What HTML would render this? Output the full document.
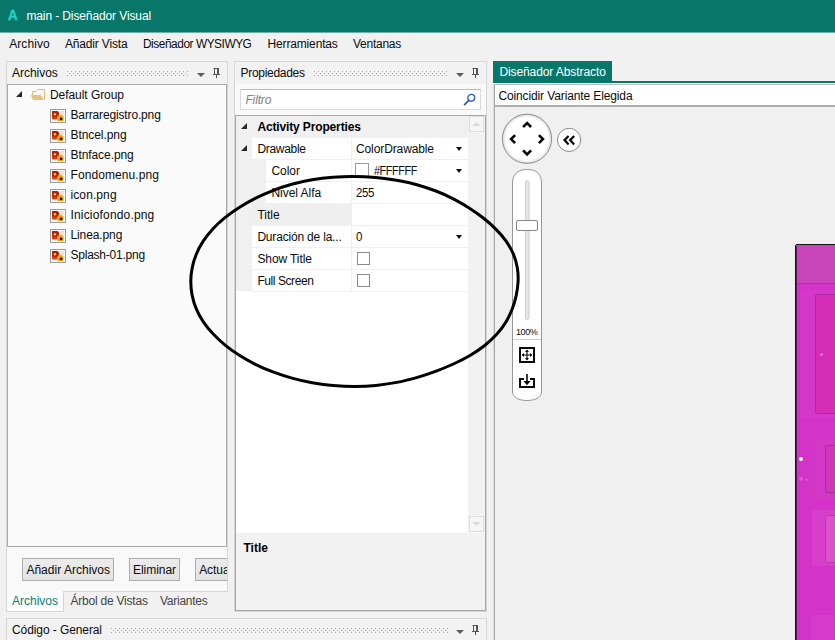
<!DOCTYPE html>
<html lang="es">
<head>
<meta charset="utf-8">
<title>main - Diseñador Visual</title>
<style>
*{box-sizing:border-box;margin:0;padding:0}
html,body{width:835px;height:640px;overflow:hidden;background:#f1f1f1;font-family:"Liberation Sans",sans-serif;font-size:12px;color:#0c0c0c}
.a{position:absolute}
.t{position:absolute;white-space:nowrap;line-height:14px;font-size:12px}
.btn{position:absolute;border:1px solid #adadad;background:linear-gradient(#ececec,#e2e2e2);height:23px}
.hl{position:absolute;height:1px;background:#f0f0f0}
.cb{position:absolute;width:13px;height:13px;border:1px solid #8c8c8c;background:#fff}
.dd{position:absolute;width:0;height:0;border-left:3.5px solid transparent;border-right:3.5px solid transparent;border-top:4px solid #111}
</style>
</head>
<body>
<!-- ===== title bar ===== -->
<div class="a" style="left:0;top:0;width:835px;height:33px;background:#08776a"></div>
<div class="a" style="left:0;top:32px;width:835px;height:1px;background:#6fada5"></div>
<span class="t" style="left:8.3px;top:6.9px;color:#22d1c0;font-weight:bold;font-size:14px;line-height:16px;transform:scaleX(.95);transform-origin:0 0;-webkit-text-stroke:0.5px #22d1c0">A</span>

<!-- ===== left panel: Archivos ===== -->
<div class="a" style="left:6px;top:61px;width:222px;height:531px;background:#f9f9f9;border:1px solid #d6d6d6"></div>
<div class="a" style="left:7px;top:62px;width:220px;height:22px;background:#f2f2f2"></div>
<div class="a" style="left:6px;top:591px;width:58px;height:21px;background:#fcfcfc;border:1px solid #d6d6d6;border-top:none"></div>
<svg class="a" style="left:66px;top:71px" width="122" height="5"><defs><pattern id="gp" width="4" height="4" patternUnits="userSpaceOnUse"><rect x="1" y="0" width="1" height="1" fill="#a6a6a6"/><rect x="3" y="2" width="1" height="1" fill="#a6a6a6"/></pattern></defs><rect width="122" height="5" fill="url(#gp)"/></svg>
<svg class="a" style="left:196px;top:66px" width="26" height="14" viewBox="0 0 26 14"><path d="M1 7h8l-4 4z" fill="#5a5a5a"/><path d="M17.5 2.5h5M18.5 2.5v6M21.5 2v6.5M22.5 2v6.5M17 8.5h7M20.5 9v3" stroke="#555" stroke-width="1" fill="none"/></svg>
<div class="a" style="left:7px;top:84px;width:220px;height:463px;background:#fafafa;border:1px solid #a9a9a9"></div>
<!-- tree -->
<svg class="a" style="left:14px;top:88px" width="34" height="14" viewBox="0 0 34 14"><path d="M2 9h6v-6z" fill="#262626"/><path d="M18.5 7.5V3.5H22L23.5 1.5H30.5V11.5H29" fill="none" stroke="#e8bc76" stroke-width="1"/><path d="M16.8 7H26.7L29.6 11.6V12H19L17.2 8z" fill="#e9bf7c"/></svg>
<svg class="a" style="left:50px;top:109px" width="16" height="14" viewBox="0 0 16 14"><rect x=".5" y=".5" width="15" height="13" fill="#fff" stroke="#9c9c9c"/><svg x="2" y="2" width="12" height="10" viewBox="2 2 12 10"><rect x="2" y="2" width="12" height="10" fill="#eef1e4"/><rect x="9" y="2" width="5" height="4" fill="#e2ead2"/><path d="M2 2H7.6Q9.4 3.4 9.2 5.6L8.4 8L6.2 10.2H3L2 9.4z" fill="#b41f10"/><path d="M2 6.8Q5 8.4 8.6 7L6.2 10.2H3L2 9.4z" fill="#d33d18"/><circle cx="4.9" cy="5.3" r="1.25" fill="#ecd90e"/><circle cx="10.4" cy="9.4" r="3.3" fill="#f5a20f"/><circle cx="11.1" cy="9.9" r="1.35" fill="#1c1206"/></svg></svg>
<svg class="a" style="left:50px;top:129px" width="16" height="14" viewBox="0 0 16 14"><rect x=".5" y=".5" width="15" height="13" fill="#fff" stroke="#9c9c9c"/><svg x="2" y="2" width="12" height="10" viewBox="2 2 12 10"><rect x="2" y="2" width="12" height="10" fill="#eef1e4"/><rect x="9" y="2" width="5" height="4" fill="#e2ead2"/><path d="M2 2H7.6Q9.4 3.4 9.2 5.6L8.4 8L6.2 10.2H3L2 9.4z" fill="#b41f10"/><path d="M2 6.8Q5 8.4 8.6 7L6.2 10.2H3L2 9.4z" fill="#d33d18"/><circle cx="4.9" cy="5.3" r="1.25" fill="#ecd90e"/><circle cx="10.4" cy="9.4" r="3.3" fill="#f5a20f"/><circle cx="11.1" cy="9.9" r="1.35" fill="#1c1206"/></svg></svg>
<svg class="a" style="left:50px;top:149px" width="16" height="14" viewBox="0 0 16 14"><rect x=".5" y=".5" width="15" height="13" fill="#fff" stroke="#9c9c9c"/><svg x="2" y="2" width="12" height="10" viewBox="2 2 12 10"><rect x="2" y="2" width="12" height="10" fill="#eef1e4"/><rect x="9" y="2" width="5" height="4" fill="#e2ead2"/><path d="M2 2H7.6Q9.4 3.4 9.2 5.6L8.4 8L6.2 10.2H3L2 9.4z" fill="#b41f10"/><path d="M2 6.8Q5 8.4 8.6 7L6.2 10.2H3L2 9.4z" fill="#d33d18"/><circle cx="4.9" cy="5.3" r="1.25" fill="#ecd90e"/><circle cx="10.4" cy="9.4" r="3.3" fill="#f5a20f"/><circle cx="11.1" cy="9.9" r="1.35" fill="#1c1206"/></svg></svg>
<svg class="a" style="left:50px;top:169px" width="16" height="14" viewBox="0 0 16 14"><rect x=".5" y=".5" width="15" height="13" fill="#fff" stroke="#9c9c9c"/><svg x="2" y="2" width="12" height="10" viewBox="2 2 12 10"><rect x="2" y="2" width="12" height="10" fill="#eef1e4"/><rect x="9" y="2" width="5" height="4" fill="#e2ead2"/><path d="M2 2H7.6Q9.4 3.4 9.2 5.6L8.4 8L6.2 10.2H3L2 9.4z" fill="#b41f10"/><path d="M2 6.8Q5 8.4 8.6 7L6.2 10.2H3L2 9.4z" fill="#d33d18"/><circle cx="4.9" cy="5.3" r="1.25" fill="#ecd90e"/><circle cx="10.4" cy="9.4" r="3.3" fill="#f5a20f"/><circle cx="11.1" cy="9.9" r="1.35" fill="#1c1206"/></svg></svg>
<svg class="a" style="left:50px;top:189px" width="16" height="14" viewBox="0 0 16 14"><rect x=".5" y=".5" width="15" height="13" fill="#fff" stroke="#9c9c9c"/><svg x="2" y="2" width="12" height="10" viewBox="2 2 12 10"><rect x="2" y="2" width="12" height="10" fill="#eef1e4"/><rect x="9" y="2" width="5" height="4" fill="#e2ead2"/><path d="M2 2H7.6Q9.4 3.4 9.2 5.6L8.4 8L6.2 10.2H3L2 9.4z" fill="#b41f10"/><path d="M2 6.8Q5 8.4 8.6 7L6.2 10.2H3L2 9.4z" fill="#d33d18"/><circle cx="4.9" cy="5.3" r="1.25" fill="#ecd90e"/><circle cx="10.4" cy="9.4" r="3.3" fill="#f5a20f"/><circle cx="11.1" cy="9.9" r="1.35" fill="#1c1206"/></svg></svg>
<svg class="a" style="left:50px;top:209px" width="16" height="14" viewBox="0 0 16 14"><rect x=".5" y=".5" width="15" height="13" fill="#fff" stroke="#9c9c9c"/><svg x="2" y="2" width="12" height="10" viewBox="2 2 12 10"><rect x="2" y="2" width="12" height="10" fill="#eef1e4"/><rect x="9" y="2" width="5" height="4" fill="#e2ead2"/><path d="M2 2H7.6Q9.4 3.4 9.2 5.6L8.4 8L6.2 10.2H3L2 9.4z" fill="#b41f10"/><path d="M2 6.8Q5 8.4 8.6 7L6.2 10.2H3L2 9.4z" fill="#d33d18"/><circle cx="4.9" cy="5.3" r="1.25" fill="#ecd90e"/><circle cx="10.4" cy="9.4" r="3.3" fill="#f5a20f"/><circle cx="11.1" cy="9.9" r="1.35" fill="#1c1206"/></svg></svg>
<svg class="a" style="left:50px;top:229px" width="16" height="14" viewBox="0 0 16 14"><rect x=".5" y=".5" width="15" height="13" fill="#fff" stroke="#9c9c9c"/><svg x="2" y="2" width="12" height="10" viewBox="2 2 12 10"><rect x="2" y="2" width="12" height="10" fill="#eef1e4"/><rect x="9" y="2" width="5" height="4" fill="#e2ead2"/><path d="M2 2H7.6Q9.4 3.4 9.2 5.6L8.4 8L6.2 10.2H3L2 9.4z" fill="#b41f10"/><path d="M2 6.8Q5 8.4 8.6 7L6.2 10.2H3L2 9.4z" fill="#d33d18"/><circle cx="4.9" cy="5.3" r="1.25" fill="#ecd90e"/><circle cx="10.4" cy="9.4" r="3.3" fill="#f5a20f"/><circle cx="11.1" cy="9.9" r="1.35" fill="#1c1206"/></svg></svg>
<svg class="a" style="left:50px;top:249px" width="16" height="14" viewBox="0 0 16 14"><rect x=".5" y=".5" width="15" height="13" fill="#fff" stroke="#9c9c9c"/><svg x="2" y="2" width="12" height="10" viewBox="2 2 12 10"><rect x="2" y="2" width="12" height="10" fill="#eef1e4"/><rect x="9" y="2" width="5" height="4" fill="#e2ead2"/><path d="M2 2H7.6Q9.4 3.4 9.2 5.6L8.4 8L6.2 10.2H3L2 9.4z" fill="#b41f10"/><path d="M2 6.8Q5 8.4 8.6 7L6.2 10.2H3L2 9.4z" fill="#d33d18"/><circle cx="4.9" cy="5.3" r="1.25" fill="#ecd90e"/><circle cx="10.4" cy="9.4" r="3.3" fill="#f5a20f"/><circle cx="11.1" cy="9.9" r="1.35" fill="#1c1206"/></svg></svg>
<!-- buttons -->
<div class="btn" style="left:22px;top:558px;width:92px"></div>
<div class="btn" style="left:129px;top:558px;width:51px"></div>
<div class="btn" style="left:195px;top:558px;width:40px;clip-path:inset(0 8px 0 0)"></div>

<!-- ===== middle panel: Propiedades ===== -->
<div class="a" style="left:234px;top:61px;width:253px;height:551px;background:#f9f9f9;border:1px solid #d6d6d6"></div>
<div class="a" style="left:235px;top:62px;width:251px;height:22px;background:#f2f2f2"></div>
<svg class="a" style="left:313px;top:71px" width="134" height="5"><rect width="134" height="5" fill="url(#gp)"/></svg>
<svg class="a" style="left:455px;top:66px" width="26" height="14" viewBox="0 0 26 14"><path d="M1 7h8l-4 4z" fill="#5a5a5a"/><path d="M17.5 2.5h5M18.5 2.5v6M21.5 2v6.5M22.5 2v6.5M17 8.5h7M20.5 9v3" stroke="#555" stroke-width="1" fill="none"/></svg>
<div class="a" style="left:240px;top:89px;width:241px;height:21px;background:#fff;border:1px solid #d6dae3;border-top-color:#b9bdc6"></div>
<svg class="a" style="left:462px;top:92px" width="16" height="15" viewBox="0 0 16 15"><circle cx="9.3" cy="5.8" r="3.4" fill="#fff" stroke="#2f5fb3" stroke-width="1.4"/><path d="M6.8 8.4L2.6 12.6" stroke="#2f5fb3" stroke-width="1.8" stroke-linecap="round"/></svg>
<!-- grid -->
<div class="a" style="left:235px;top:115px;width:251px;height:496px;background:#f2f2f2;border:1px solid #a6a6a6"></div>
<div class="a" style="left:236px;top:532px;width:249px;height:1px;background:#fafafa"></div>
<div class="a" style="left:236px;top:116px;width:232px;height:416px;background:#fff"></div>
<div class="a" style="left:236px;top:116px;width:232px;height:22px;background:#f0f0f0"></div>
<div class="a" style="left:236px;top:138px;width:16px;height:153px;background:#f0f0f0"></div>
<div class="a" style="left:252px;top:160px;width:14px;height:44px;background:#f0f0f0"></div>
<div class="a" style="left:252px;top:204px;width:99px;height:22px;background:#efefef"></div>
<div class="hl" style="left:252px;top:159px;width:216px"></div>
<div class="hl" style="left:252px;top:181px;width:216px"></div>
<div class="hl" style="left:252px;top:203px;width:216px"></div>
<div class="hl" style="left:252px;top:225px;width:216px"></div>
<div class="hl" style="left:252px;top:247px;width:216px"></div>
<div class="hl" style="left:252px;top:269px;width:216px"></div>
<div class="hl" style="left:252px;top:291px;width:216px"></div>
<div class="a" style="left:351px;top:138px;width:1px;height:153px;background:#f0f0f0"></div>
<svg class="a" style="left:240px;top:121.5px" width="8" height="8"><path d="M1 7h6v-6z" fill="#262626"/></svg>
<svg class="a" style="left:240px;top:143.5px" width="8" height="8"><path d="M1 7h6v-6z" fill="#262626"/></svg>
<div class="dd" style="left:456px;top:147px"></div>
<div class="dd" style="left:456px;top:169px"></div>
<div class="dd" style="left:456px;top:235px"></div>
<div class="cb" style="left:355px;top:163px;width:14px;height:15px;border-color:#9a9a9a"></div>
<div class="cb" style="left:357px;top:252px"></div>
<div class="cb" style="left:357px;top:274px"></div>
<!-- scroll buttons -->
<div class="a" style="left:469px;top:116px;width:15px;height:16px;background:#f6f6f6;border:1px solid #dcdcdc"></div>
<svg class="a" style="left:472px;top:121px" width="9" height="6"><path d="M0.5 5h8l-4-4z" fill="#dadada"/></svg>
<div class="a" style="left:469px;top:516px;width:15px;height:16px;background:#f6f6f6;border:1px solid #dcdcdc"></div>
<svg class="a" style="left:472px;top:521px" width="9" height="6"><path d="M0.5 1h8l-4 4z" fill="#dadada"/></svg>

<!-- ===== right: Diseñador Abstracto ===== -->
<div class="a" style="left:493px;top:61px;width:119px;height:22px;background:#08776a"></div>
<div class="a" style="left:493px;top:81px;width:342px;height:2px;background:#08776a"></div>
<div class="a" style="left:493px;top:83px;width:342px;height:1px;background:#f8f8f8"></div>
<div class="a" style="left:494px;top:84px;width:345px;height:560px;background:#f0f0f0;border:1px solid #a8a8a8;border-top-color:#bdbdbd"></div>
<div class="a" style="left:495px;top:85px;width:340px;height:22px;background:#fff;border-bottom:2px solid #b0b0b0"></div>
<div class="a" style="left:493px;top:84px;width:1px;height:556px;background:#dcdcdc"></div>
<!-- nav circle -->
<svg class="a" style="left:500px;top:112px" width="86" height="54" viewBox="500 112 86 54">
  <defs><radialGradient id="rg" cx="50%" cy="50%" r="50%"><stop offset="0.86" stop-color="#fff"/><stop offset="1" stop-color="#d9d9d9"/></radialGradient></defs>
  <circle cx="527" cy="138.8" r="24.6" fill="url(#rg)" stroke="#8e8e8e" stroke-width="1"/>
  <g fill="none" stroke="#0a0a0a" stroke-width="2.6" stroke-linejoin="miter">
    <path d="M523.1 127L527.1 123L531.1 127"/>
    <path d="M523.1 150.4L527.1 154.4L531.1 150.4"/>
    <path d="M515.1 135.1L511.1 139.1L515.1 143.1"/>
    <path d="M538.9 135.1L542.9 139.1L538.9 143.1"/>
  </g>
  <circle cx="569.1" cy="139.9" r="11.6" fill="#fff" stroke="#8a8a8a" stroke-width="1"/>
  <g fill="none" stroke="#0a0a0a" stroke-width="2.2" stroke-linejoin="miter">
    <path d="M568.6 136L564.5 140.1L568.6 144.4"/>
    <path d="M574.2 136L570.1 140.1L574.2 144.4"/>
  </g>
</svg>
<!-- zoom slider -->
<svg class="a" style="left:508px;top:166px" width="40" height="238" viewBox="508 166 40 238">
  <path d="M512.5 183 C512.5 174 518 169.5 527.2 169.5 C536.5 169.5 541.5 174 541.5 183 L541.5 392 C541.5 397 536 400.5 527 400.5 C518 400.5 512.5 397 512.5 392 Z" fill="#fff" stroke="#979797" stroke-width="1"/>
  <rect x="525.5" y="180.5" width="3.6" height="139" rx="1.8" fill="#e3e6e3" stroke="#c6c6c6" stroke-width="0.8"/>
  <rect x="516.5" y="220.5" width="21" height="10" rx="1.5" fill="#fff" stroke="#858585" stroke-width="1"/>
  <path d="M513 339.5H541" stroke="#cfcfcf" stroke-width="1"/>
  <!-- fit icon -->
  <rect x="520" y="348" width="14" height="14" fill="#fff" stroke="#0a0a0a" stroke-width="2"/>
  <path d="M527 350.5v9M522.5 355h9" stroke="#0a0a0a" stroke-width="1.1"/>
  <path d="M527 349.6l2 2.4h-4zM527 360.4l2-2.4h-4zM521.6 355l2.4-2v4zM532.4 355l-2.4-2v4z" fill="#0a0a0a"/>
  <!-- import icon -->
  <path d="M524 379h-4v8h14v-8h-4" fill="none" stroke="#0a0a0a" stroke-width="2"/>
  <path d="M527 374v8" stroke="#0a0a0a" stroke-width="1.6"/>
  <path d="M527 385.2l3.6-4.2h-7.2z" fill="#0a0a0a"/>
</svg>
<!-- pink layout preview -->
<div class="a" style="left:795px;top:244px;width:45px;height:400px;background:#d433c9;border:1px solid #141414;border-top-left-radius:2px"></div>
<div class="a" style="left:796px;top:245px;width:39px;height:39px;background:#c846ba;border-bottom:1px solid #ad31a2"></div>
<div class="a" style="left:796px;top:246px;width:1px;height:394px;background:rgba(0,0,0,.55)"></div>
<div class="a" style="left:800px;top:290px;width:35px;height:128px;background:#d637cb"></div>
<div class="a" style="left:815px;top:294px;width:25px;height:120px;background:#d62db7;border:1px solid #a92b9c;border-radius:2px"></div>
<div class="a" style="left:819.5px;top:352.5px;width:3px;height:3px;border-radius:50%;background:#e26fd6"></div>
<div class="a" style="left:810px;top:438px;width:25px;height:62px;background:#d03ac4;opacity:.6"></div>
<div class="a" style="left:825px;top:445px;width:15px;height:48px;background:#cf37b6;border:1px solid #a92b9c;border-radius:2px"></div>
<div class="a" style="left:812px;top:510px;width:23px;height:56px;background:#d845cc;opacity:.7"></div>
<div class="a" style="left:825px;top:515px;width:15px;height:48px;background:#da52cb;border:1px solid #bb36ad;border-radius:2px"></div>
<div class="a" style="left:810px;top:614px;width:25px;height:30px;background:#d63bcb;border:1px solid #cf35c4"></div>
<div class="a" style="left:799px;top:457px;width:4px;height:4px;border-radius:50%;background:#fff"></div>
<div class="a" style="left:799px;top:477px;width:4px;height:4px;border-radius:50%;background:#e05dd6"></div>
<div class="a" style="left:804.5px;top:477.5px;width:3px;height:3px;border-radius:50%;background:#dc4dd1"></div>

<!-- ===== bottom: Código - General ===== -->
<div class="a" style="left:6px;top:618px;width:481px;height:30px;background:#f2f2f2;border:1px solid #d6d6d6"></div>
<svg class="a" style="left:110px;top:628px" width="338" height="5"><rect width="338" height="5" fill="url(#gp)"/></svg>
<svg class="a" style="left:455px;top:623px" width="26" height="14" viewBox="0 0 26 14"><path d="M1 7h8l-4 4z" fill="#5a5a5a"/><path d="M17.5 2.5h5M18.5 2.5v6M21.5 2v6.5M22.5 2v6.5M17 8.5h7M20.5 9v3" stroke="#555" stroke-width="1" fill="none"/></svg>

<!-- ===== text ===== -->
<span class="t" style="left:26.4px;top:8.5px;letter-spacing:-0.11px;color:#ffffff;">main - Diseñador Visual</span>
<span class="t" style="left:9.2px;top:37.4px;letter-spacing:0.08px;">Archivo</span>
<span class="t" style="left:65.0px;top:37.4px;letter-spacing:-0.17px;">Añadir Vista</span>
<span class="t" style="left:143.2px;top:37.4px;letter-spacing:-0.45px;transform:scaleX(0.9879);transform-origin:0 50%;">Diseñador WYSIWYG</span>
<span class="t" style="left:267.5px;top:37.4px;letter-spacing:-0.15px;">Herramientas</span>
<span class="t" style="left:353.0px;top:37.4px;letter-spacing:-0.26px;">Ventanas</span>
<span class="t" style="left:12.0px;top:65.8px;letter-spacing:-0.03px;">Archivos</span>
<span class="t" style="left:50.0px;top:88.2px;letter-spacing:-0.06px;">Default Group</span>
<span class="t" style="left:70.5px;top:108.2px;letter-spacing:-0.15px;">Barraregistro.png</span>
<span class="t" style="left:70.5px;top:128.2px;letter-spacing:-0.07px;">Btncel.png</span>
<span class="t" style="left:70.5px;top:148.2px;letter-spacing:-0.08px;">Btnface.png</span>
<span class="t" style="left:70.5px;top:168.2px;letter-spacing:0.08px;">Fondomenu.png</span>
<span class="t" style="left:70.5px;top:188.2px;letter-spacing:0.10px;">icon.png</span>
<span class="t" style="left:70.5px;top:208.2px;letter-spacing:0.17px;">Iniciofondo.png</span>
<span class="t" style="left:70.5px;top:228.2px;letter-spacing:-0.11px;">Linea.png</span>
<span class="t" style="left:70.5px;top:248.2px;letter-spacing:-0.23px;">Splash-01.png</span>
<span class="t" style="left:26.4px;top:562.5px;letter-spacing:0.02px;">Añadir Archivos</span>
<span class="t" style="left:133.0px;top:562.5px;letter-spacing:-0.04px;">Eliminar</span>
<span class="t" style="left:199.2px;top:562.5px;letter-spacing:-0.07px;width:27.8px;overflow:hidden;">Actualizar</span>
<span class="t" style="left:12.0px;top:593.5px;letter-spacing:-0.00px;color:#0c8072;">Archivos</span>
<span class="t" style="left:70.4px;top:593.5px;letter-spacing:-0.21px;color:#444444;">Árbol de Vistas</span>
<span class="t" style="left:160.0px;top:593.5px;letter-spacing:-0.26px;color:#444444;">Variantes</span>
<span class="t" style="left:12.0px;top:623.0px;letter-spacing:-0.09px;">Código - General</span>
<span class="t" style="left:240.5px;top:65.8px;letter-spacing:-0.29px;">Propiedades</span>
<span class="t" style="left:245.4px;top:92.8px;letter-spacing:-0.13px;color:#808080;font-style:italic;">Filtro</span>
<span class="t" style="left:257.4px;top:119.8px;letter-spacing:-0.14px;color:#000;font-weight:bold;">Activity Properties</span>
<span class="t" style="left:257.4px;top:141.8px;letter-spacing:-0.30px;">Drawable</span>
<span class="t" style="left:356.0px;top:141.8px;letter-spacing:-0.11px;">ColorDrawable</span>
<span class="t" style="left:271.4px;top:163.8px;letter-spacing:-0.02px;">Color</span>
<span class="t" style="left:373.9px;top:163.8px;letter-spacing:-0.45px;transform:scaleX(0.9030);transform-origin:0 50%;">#FFFFFF</span>
<span class="t" style="left:271.4px;top:185.8px;letter-spacing:-0.02px;">Nivel Alfa</span>
<span class="t" style="left:356.0px;top:185.8px;letter-spacing:-0.45px;transform:scaleX(0.9582);transform-origin:0 50%;">255</span>
<span class="t" style="left:257.4px;top:207.8px;letter-spacing:0.03px;">Title</span>
<span class="t" style="left:257.4px;top:229.8px;letter-spacing:-0.19px;">Duración de la...</span>
<span class="t" style="left:356.0px;top:229.8px;letter-spacing:-0.45px;transform:scaleX(0.9619);transform-origin:0 50%;">0</span>
<span class="t" style="left:257.4px;top:251.8px;letter-spacing:-0.09px;">Show Title</span>
<span class="t" style="left:257.4px;top:273.8px;letter-spacing:-0.42px;">Full Screen</span>
<span class="t" style="left:243.4px;top:540.8px;letter-spacing:0.03px;color:#000;font-weight:bold;">Title</span>
<span class="t" style="left:499.4px;top:64.5px;letter-spacing:-0.09px;color:#ffffff;">Diseñador Abstracto</span>
<span class="t" style="left:498.4px;top:88.5px;letter-spacing:-0.12px;">Coincidir Variante Elegida</span>
<span class="t" style="left:516.4px;top:326.4px;letter-spacing:-0.45px;font-size:9.5px;line-height:11.5px;transform:scaleX(0.9506);transform-origin:0 50%;">100%</span>

<!-- hand-drawn ellipse annotation -->
<svg class="a" style="left:0;top:0" width="835" height="640" viewBox="0 0 835 640">
  <path d="M518.1,281.4C517.9,286.0 517.2,290.6 516.3,295.1C515.3,299.6 514.1,304.1 512.4,308.5C510.7,312.9 508.7,317.4 506.1,321.7C503.5,326.0 500.5,330.1 496.9,334.1C493.3,338.1 489.2,341.9 484.7,345.5C480.2,349.1 475.2,352.4 470.0,355.5C464.8,358.6 459.1,361.4 453.4,364.0C447.6,366.6 441.6,369.1 435.5,371.4C429.4,373.7 423.1,375.8 416.6,377.6C410.1,379.4 403.5,381.1 396.7,382.4C389.9,383.7 382.9,384.8 375.9,385.5C368.9,386.2 361.6,386.5 354.5,386.5C347.4,386.5 340.2,386.1 333.1,385.5C326.1,384.9 319.1,383.9 312.2,382.7C305.3,381.5 298.5,379.9 292.0,378.1C285.5,376.3 279.1,374.2 273.0,371.9C266.9,369.6 260.9,367.1 255.3,364.3C249.7,361.5 244.3,358.5 239.3,355.3C234.3,352.1 229.5,348.7 225.1,345.1C220.7,341.5 216.7,337.7 213.0,333.8C209.3,329.9 206.0,325.8 203.2,321.6C200.4,317.4 198.0,313.0 196.2,308.6C194.3,304.2 193.0,299.6 192.1,295.1C191.2,290.6 190.8,286.0 190.8,281.4C190.8,276.8 191.3,272.2 192.2,267.7C193.1,263.2 194.5,258.6 196.3,254.2C198.1,249.8 200.4,245.4 203.2,241.2C205.9,237.0 209.2,232.8 212.8,228.9C216.4,225.0 220.6,221.3 225.0,217.7C229.4,214.1 234.2,210.7 239.2,207.5C244.2,204.3 249.6,201.2 255.2,198.4C260.8,195.6 266.6,193.0 272.7,190.6C278.8,188.2 285.2,186.0 291.8,184.2C298.4,182.4 305.1,180.9 312.0,179.7C318.9,178.5 326.0,177.7 333.1,177.2C340.2,176.7 347.4,176.4 354.5,176.5C361.6,176.6 368.8,177.0 375.8,177.6C382.8,178.2 389.9,179.1 396.7,180.3C403.5,181.5 410.4,182.9 416.9,184.7C423.4,186.5 429.8,188.7 435.9,191.0C442.0,193.3 447.8,196.0 453.3,198.8C458.8,201.6 464.1,204.7 469.1,207.9C474.1,211.1 478.9,214.5 483.3,218.0C487.8,221.5 492.0,225.2 495.8,229.1C499.6,232.9 503.2,236.9 506.1,241.1C509.0,245.3 511.5,249.7 513.4,254.1C515.3,258.5 516.5,263.1 517.3,267.7C518.1,272.2 518.3,276.8 518.1,281.4Z" fill="none" stroke="#000" stroke-width="3" stroke-linejoin="round"/>
</svg>
</body>
</html>
